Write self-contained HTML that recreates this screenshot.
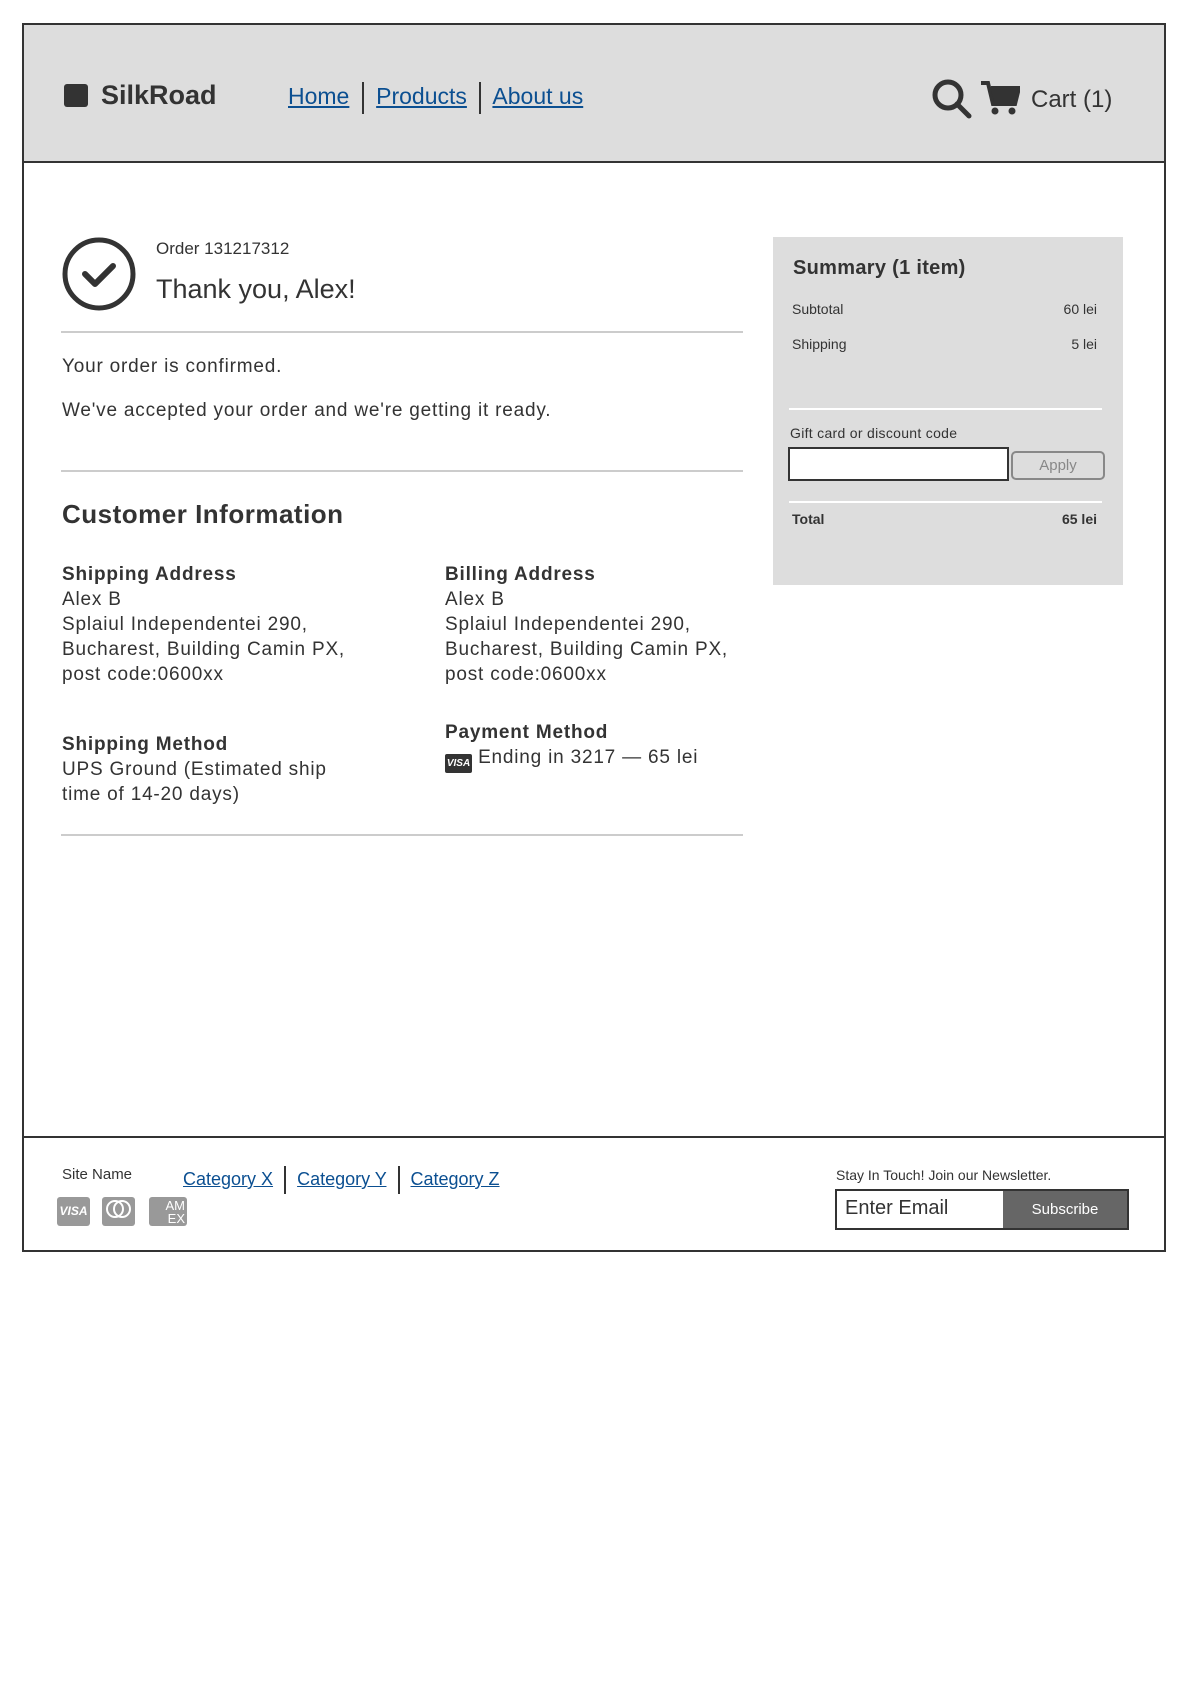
<!DOCTYPE html>
<html><head><meta charset="utf-8"><style>
*{margin:0;padding:0;box-sizing:border-box}
body{width:1191px;height:1684px;background:#fff;font-family:"Liberation Sans",sans-serif;color:#333;position:relative;overflow:hidden}
.a{position:absolute;white-space:nowrap}
a,.lk{color:#0b4f91;text-decoration:underline}
.hr{position:absolute;height:2px;background:#ccc}
.b{font-weight:bold}
.t{letter-spacing:0.8px}
</style></head><body>
<div class="a" style="left:22px;top:23px;width:1144px;height:1229px;border:2px solid #333"></div>
<div class="a" style="left:24px;top:25px;width:1140px;height:138px;background:#ddd;border-bottom:2px solid #333"></div>
<div class="a" style="left:22px;top:1136px;width:1144px;height:2px;background:#333"></div>

<div class="a" style="left:64px;top:84px;width:24px;height:23px;background:#333;border-radius:3px"></div>
<div class="a b" style="left:101px;top:80px;font-size:27px">SilkRoad</div>
<div class="a" style="left:288px;top:82px;font-size:23px"><span class="lk">Home</span> <span style="display:inline-block;width:2px;height:32px;background:#333;vertical-align:middle;margin:0 6px"></span> <span class="lk">Products</span> <span style="display:inline-block;width:2px;height:32px;background:#333;vertical-align:middle;margin:0 6px"></span> <span class="lk">About us</span></div>
<svg class="a" style="left:931px;top:78px" width="42" height="42" viewBox="0 0 42 42"><circle cx="17" cy="17" r="13" fill="none" stroke="#333" stroke-width="5"/><line x1="26" y1="26" x2="38" y2="38" stroke="#333" stroke-width="5" stroke-linecap="round"/></svg>
<svg class="a" style="left:980px;top:80px" width="40" height="36" viewBox="0 0 40 36"><path d="M1 3h7l5 21h22l4-16H11" fill="none" stroke="#333" stroke-width="4"/><path d="M11 9h27l-4 14H14z" fill="#333"/><circle cx="15" cy="31" r="3.5" fill="#333"/><circle cx="32" cy="31" r="3.5" fill="#333"/></svg>
<div class="a" style="left:1031px;top:86px;font-size:24px">Cart (1)</div>

<svg class="a" style="left:61px;top:236px" width="76" height="76" viewBox="0 0 76 76"><circle cx="38" cy="38" r="34" fill="none" stroke="#333" stroke-width="5"/><path d="M24 38l10 10 18-18" fill="none" stroke="#333" stroke-width="6" stroke-linecap="round" stroke-linejoin="round"/></svg>
<div class="a" style="left:156px;top:239px;font-size:17px">Order 131217312</div>
<div class="a" style="left:156px;top:274px;font-size:27px">Thank you, Alex!</div>
<div class="hr" style="left:61px;top:331px;width:682px"></div>
<div class="a t" style="left:62px;top:356px;font-size:19px">Your order is confirmed.</div>
<div class="a t" style="left:62px;top:400px;font-size:19px">We've accepted your order and we're getting it ready.</div>
<div class="hr" style="left:61px;top:470px;width:682px"></div>
<div class="a b" style="left:62px;top:499px;font-size:26px;letter-spacing:0.5px">Customer Information</div>
<div class="a t" style="left:62px;top:562px;font-size:19px;line-height:25px"><b>Shipping Address</b><br>Alex B<br>Splaiul Independentei 290,<br>Bucharest, Building Camin PX,<br>post code:0600xx</div>
<div class="a t" style="left:445px;top:562px;font-size:19px;line-height:25px"><b>Billing Address</b><br>Alex B<br>Splaiul Independentei 290,<br>Bucharest, Building Camin PX,<br>post code:0600xx</div>
<div class="a t" style="left:62px;top:732px;font-size:19px;line-height:25px"><b>Shipping Method</b><br>UPS Ground (Estimated ship<br>time of 14-20 days)</div>
<div class="a t" style="left:445px;top:720px;font-size:19px;line-height:25px"><b>Payment Method</b><br><span style="display:inline-block;width:27px;height:19px;background:#333;color:#fff;font-size:10px;font-weight:bold;font-style:italic;text-align:center;line-height:19px;vertical-align:-3px;border-radius:2px;letter-spacing:0">VISA</span> Ending in 3217 — 65 lei</div>
<div class="hr" style="left:61px;top:834px;width:682px"></div>

<div class="a" style="left:773px;top:237px;width:350px;height:348px;background:#ddd"></div>
<div class="a b" style="left:793px;top:257px;font-size:20px;letter-spacing:0.3px">Summary (1 item)</div>
<div class="a" style="left:792px;top:301px;font-size:14px">Subtotal</div>
<div class="a" style="left:1040px;top:301px;width:57px;text-align:right;font-size:14px">60 lei</div>
<div class="a" style="left:792px;top:336px;font-size:14px">Shipping</div>
<div class="a" style="left:1040px;top:336px;width:57px;text-align:right;font-size:14px">5 lei</div>
<div class="a" style="left:789px;top:408px;width:313px;height:2px;background:#fff"></div>
<div class="a" style="left:790px;top:425px;font-size:14px;letter-spacing:0.3px">Gift card or discount code</div>
<div class="a" style="left:788px;top:447px;width:221px;height:34px;background:#fff;border:2px solid #333"></div>
<div class="a" style="left:1011px;top:451px;width:94px;height:29px;background:#ddd;border:2px solid #888;border-radius:5px;color:#888;font-size:15px;text-align:center;line-height:25px">Apply</div>
<div class="a" style="left:789px;top:501px;width:313px;height:2px;background:#fff"></div>
<div class="a b" style="left:792px;top:511px;font-size:14px">Total</div>
<div class="a b" style="left:1040px;top:511px;width:57px;text-align:right;font-size:14px">65 lei</div>

<div class="a" style="left:62px;top:1166px;font-size:15px">Site Name</div>
<div class="a" style="left:183px;top:1166px;font-size:18px"><span class="lk">Category X</span> <span style="display:inline-block;width:2px;height:28px;background:#333;vertical-align:middle;margin:0 6px"></span> <span class="lk">Category Y</span> <span style="display:inline-block;width:2px;height:28px;background:#333;vertical-align:middle;margin:0 6px"></span> <span class="lk">Category Z</span></div>
<div class="a" style="left:57px;top:1197px;width:33px;height:29px;background:#999;border-radius:3px;color:#fff;font-size:12px;font-weight:bold;font-style:italic;text-align:center;line-height:29px">VISA</div>
<div class="a" style="left:102px;top:1197px;width:33px;height:29px;background:#999;border-radius:3px"><svg width="33" height="29"><circle cx="13" cy="12" r="8" fill="none" stroke="#fff" stroke-width="2"/><circle cx="20" cy="12" r="8" fill="none" stroke="#fff" stroke-width="2"/></svg></div>
<div class="a" style="left:149px;top:1197px;width:38px;height:29px;background:#999;border-radius:3px;color:#fff;font-size:13px;line-height:13px;text-align:right;padding:2px 2px 0 0">AM<br>EX</div>
<div class="a" style="left:836px;top:1167px;font-size:14px">Stay In Touch! Join our Newsletter.</div>
<div class="a" style="left:835px;top:1189px;width:294px;height:41px;border:2px solid #333;background:#fff"></div>
<div class="a" style="left:845px;top:1197px;font-size:20px">Enter Email</div>
<div class="a" style="left:1003px;top:1191px;width:124px;height:37px;background:#666;color:#fff;font-size:15px;text-align:center;line-height:37px">Subscribe</div>
</body></html>
